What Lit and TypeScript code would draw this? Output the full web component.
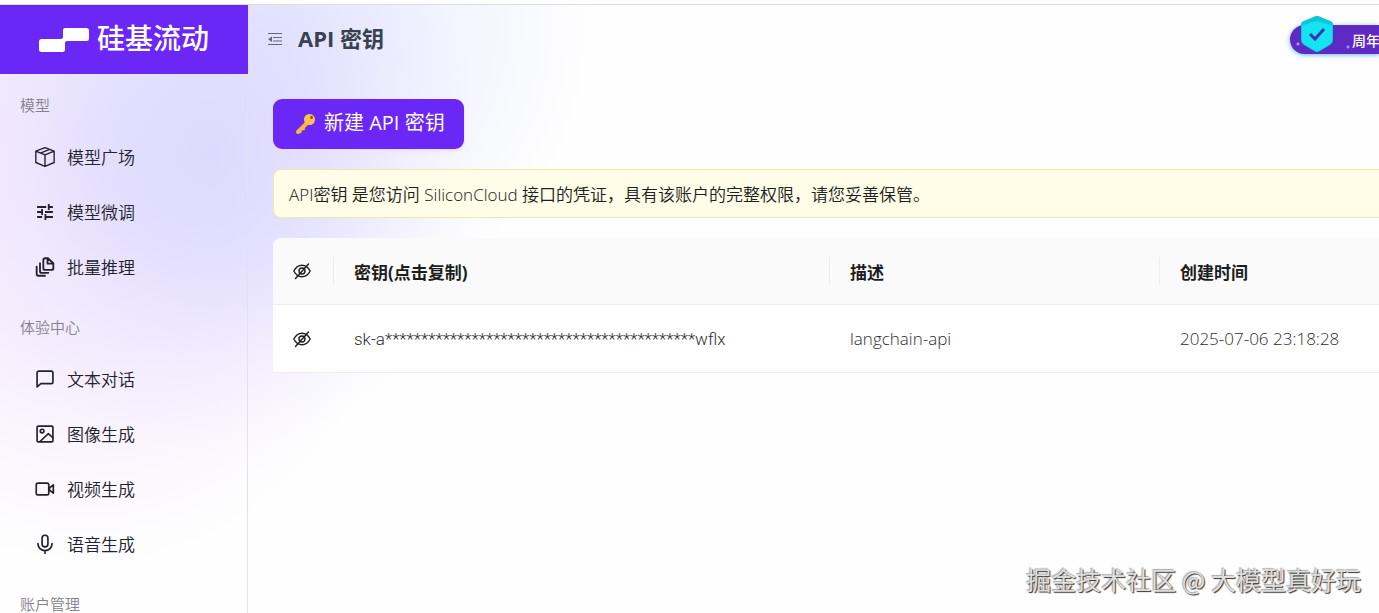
import { LitElement, html, css, svg } from "lit";
import { customElement } from "lit/decorators.js";

const stroke = (body: unknown, width = 2, size = 20) => html`
  <svg viewBox="0 0 24 24" width=${size} height=${size} fill="none" stroke="currentColor"
    stroke-width=${width} stroke-linecap="round" stroke-linejoin="round" aria-hidden="true">${body}</svg>`;

const icons = {
  cube: stroke(svg`<path d="M12 1.800 22 5.600V18L12 22.200 2 18V5.600ZM2 5.600l10 4.200 10-4.200M12 9.800v12.400M7 7.700l10-4"/>`, 1.5, 22),
  tune: stroke(svg`<path stroke-linecap="butt" d="M2.500 6h11M16.500 6h5M16.500 2.500v7M2.500 12h5.500M8.500 8.500v7M12 12h9.500M2.500 18h6M12 18h9.500M12.500 14.500v7"/>`, 2.2),
  batch: stroke(svg`<path d="M15.500 1.500h-3.500a2 2 0 0 0-2 2v10a2 2 0 0 0 2 2h8a2 2 0 0 0 2-2V7.500ZM15 2v6h6M6 7.500V17a2 2 0 0 0 2 2h8M2 11.500V20.500a2 2 0 0 0 2 2H12"/>`, 2.2),
  chat: stroke(svg`<path d="M21.500 15.500a2 2 0 0 1-2 2H7l-4.500 4V4.500a2 2 0 0 1 2-2h15a2 2 0 0 1 2 2Z"/>`, 2),
  image: stroke(svg`<rect x="2.500" y="2.500" width="19" height="19" rx="1.500"/><circle cx="8.500" cy="8.500" r="2.200"/><path d="M6 21 16 11.500l5.500 5"/>`, 2),
  video: stroke(svg`<rect x="1.500" y="5" width="15" height="14" rx="2"/><path d="m17.500 10.500 4.500-3.500v10l-4.500-3.500Z"/>`, 2),
  mic: stroke(svg`<rect x="8.500" y="1.500" width="7" height="14" rx="3.500"/><path d="M3.500 11.500a8.500 8.500 0 0 0 17 0M12 20v3"/>`, 2),
};

const hiddenEye = html`
  <svg viewBox="0 0 20 18" width="20" height="18" fill="none" stroke="currentColor"
    stroke-width="1.400" stroke-linecap="round" aria-hidden="true">
    <path d="M1.800 9C4.200 4.600 7 3.200 10 3.200S15.800 4.600 18.200 9C15.800 13.400 13 14.800 10 14.800S4.200 13.400 1.800 9Z"/>
    <circle cx="10" cy="9" r="3"/><path d="M16.500 2 3.500 16.500"/>
  </svg>`;

const sections = [
  { label: "模型", items: [["cube", "模型广场"], ["tune", "模型微调"], ["batch", "批量推理"]] },
  { label: "体验中心", items: [["chat", "文本对话"], ["image", "图像生成"], ["video", "视频生成"], ["mic", "语音生成"]] },
  { label: "账户管理", items: [] },
] as { label: string; items: [keyof typeof icons, string][] }[];

const keys = [
  { key: "sk-a" + "*".repeat(43) + "wflx", note: "langchain-api", created: "2025-07-06 23:18:28" },
];

@customElement("side-nav")
class SideNav extends LitElement {
  static styles = css`
    :host { display: flex; flex-direction: column; box-sizing: border-box; border-right: 1px solid #e3e1ec; }
    .brand { display: flex; align-items: center; justify-content: center; gap: 8px; height: 69px; flex: none;
      margin-right: -1px; background: #6b27f5; color: #fff; font-size: 28px; line-height: 36px; font-weight: 500; text-decoration: none; }
    .name { padding-bottom: 3px; }
    .label { margin: 0; padding: 19px 20px 12px; font-size: 15px; line-height: 24px; font-weight: 350; color: #85818d; }
    .list { list-style: none; margin: 0; padding: 0 0 2px; }
    .item { display: flex; align-items: center; gap: 11px; height: 55px; padding-left: 34px;
      color: #22222e; font-size: 17px; font-weight: 350; text-decoration: none; }
    .icon { display: flex; justify-content: center; width: 22px; }
  `;
  render() {
    return html`
      <a class="brand" href="#home">
        <svg viewBox="0 0 50 24" width="50" height="24" fill="#fff" aria-hidden="true">
          <path d="M26 0h21.500a2.500 2.500 0 0 1 2.500 2.500v8a2.500 2.500 0 0 1-2.500 2.500H28q-2 0-2 2v6.500a2.500 2.500 0 0 1-2.500 2.500h-21A2.500 2.500 0 0 1 0 21.500v-8A2.500 2.500 0 0 1 2.500 11H22q2 0 2-2V2a2 2 0 0 1 2-2Z"/>
        </svg>
        <span class="name">硅基流动</span>
      </a>
      <nav>
        ${sections.map((s) => html`
          <h2 class="label">${s.label}</h2>
          <ul class="list">
            ${s.items.map(([icon, text]) => html`<li><a class="item" href="#${icon}"><span class="icon">${icons[icon]}</span><span>${text}</span></a></li>`)}
          </ul>`)}
      </nav>`;
  }
}

@customElement("key-table")
class KeyTable extends LitElement {
  static styles = css`
    :host { display: block; }
    table { width: 100%; table-layout: fixed; border-collapse: separate; border-spacing: 0; font-size: 17px; color: #2c2c30; }
    .toggle-col { width: 61px; }
    .key-col { width: 496px; }
    .note-col { width: 330px; }
    th, td { box-sizing: border-box; padding: 0 20px; text-align: left; white-space: nowrap; border-bottom: 1px solid #ededf0; }
    th { height: 67px; background: #fafafa; font-weight: 700; color: #1d1d20; }
    th:first-child { border-top-left-radius: 8px; }
    th:not(:last-child) { background: linear-gradient(#ececee, #ececee) right center / 1px 28px no-repeat #fafafa; }
    td { height: 68px; background: #fff; font-weight: 350; }
    .toggle, .copy { border: 0; padding: 0; background: none; font: inherit; color: inherit; cursor: pointer; }
    .copy { font-family: Roboto, sans-serif; font-weight: 300; }
    .toggle { display: flex; color: #1d1d20; }
    th:first-child, td:first-child { padding: 0 0 0 19px; }
  `;
  render() {
    return html`
      <table>
        <colgroup><col class="toggle-col"><col class="key-col"><col class="note-col"><col></colgroup>
        <thead><tr>
          <th scope="col"><button class="toggle" aria-label="显示全部密钥">${hiddenEye}</button></th>
          <th scope="col">密钥(点击复制)</th>
          <th scope="col">描述</th>
          <th scope="col">创建时间</th>
        </tr></thead>
        <tbody>
          ${keys.map((k) => html`<tr>
            <td><button class="toggle" aria-label="显示密钥">${hiddenEye}</button></td>
            <td><button class="copy">${k.key}</button></td>
            <td>${k.note}</td>
            <td>${k.created}</td>
          </tr>`)}
        </tbody>
      </table>`;
  }
}

@customElement("app-root")
class AppRoot extends LitElement {
  static styles = css`
    :host { display: flex; flex-direction: column; position: relative; height: 100vh; overflow: hidden;
      font-family: "Open Sans", "Noto Sans CJK SC", sans-serif; }
    .edge { height: 4px; flex: none; border-bottom: 1px solid #dcdce2; background: #fff; }
    .shell { display: grid; grid-template-columns: 248px minmax(0, 1fr); flex: 1; min-height: 0;
      background:
        radial-gradient(ellipse 270px 300px at 210px 150px, #dedaff 0%, #e0dcffd0 35%, #e9e6ff60 70%, #ffffff00 100%),
        radial-gradient(ellipse 310px 300px at 280px 20px, #e2e5ff 0%, #eaedffa0 50%, #ffffff00 100%),
        radial-gradient(ellipse 340px 440px at 90px 120px, #f1e2fc 0%, #f4e8fdc0 50%, #ffffff00 100%),
        #fefefe; }
    .main { display: flex; flex-direction: column; min-width: 0; }
    .header { display: flex; align-items: center; height: 69px; padding-left: 18px; }
    .fold { display: flex; border: 0; padding: 0; background: none; color: #66687a; cursor: pointer; }
    .title { margin: 0 auto 0 12px; padding-bottom: 3px; font-size: 22px; line-height: 32px; font-weight: 700; color: #374151; }
    .promo { display: flex; align-items: center; gap: 18px; height: 29px; padding: 0 0 0 10px; width: 89px; box-sizing: border-box;
      border: 0; border-radius: 15px 0 0 15px; color: #fff; font: inherit; font-size: 14px; font-weight: 500; white-space: nowrap; cursor: pointer;
      background: radial-gradient(circle at 8px 19px, #b48cf0 1px, #b48cf000 2px), radial-gradient(circle at 58px 22px, #a888f0 1px, #a888f000 2px), #5d2bc4;
      box-shadow: 0 1px 5px #6cb4f0; }
    .shield { flex: none; margin-top: -12px; }
    .content { display: flex; flex-direction: column; align-items: flex-start; gap: 20px; padding: 25px 0 0 25px; }
    .create { display: flex; align-items: center; gap: 8px; height: 50px; padding: 0 19px 0 21px; border: 0; border-radius: 9px;
      background: #6b27f5; color: #fff; font: inherit; font-size: 20px; line-height: 28px; box-shadow: 0 2px 3px #ecdcff; cursor: pointer; }
    .caption { padding-bottom: 2px; }
    .notice { box-sizing: border-box; width: 100%; margin: 0; padding: 13px 15px 10px; border: 1px solid #f1e8a8; border-right: 0;
      border-radius: 8px 0 0 8px; background: #fffce8; font-size: 17px; line-height: 24px; font-weight: 350; color: #202018; }
    .table { width: 100%; }
    .watermark { position: absolute; right: 18px; bottom: 16px; margin: 0; font-family: "Noto Sans CJK SC", sans-serif; font-size: 25px; line-height: 36px; color: #dedede;
      text-shadow: 1px 1px 1px #333, -1px -1px 1px #aaa; }
  `;
  render() {
    return html`
      <div class="edge"></div>
      <div class="shell">
        <side-nav></side-nav>
        <main class="main">
          <header class="header">
            <button class="fold" aria-label="收起菜单">
              <svg viewBox="0 0 20 18" width="20" height="18" fill="none" stroke="currentColor" stroke-width="1.200" aria-hidden="true">
                <path d="M2 2.500h14M7 6.500h9M7 10h9M2 13.500h14"/><path d="M6 5.500v5.500L2 8.250Z" fill="currentColor" stroke="none"/>
              </svg>
            </button>
            <h1 class="title">API 密钥</h1>
            <button class="promo">
              <svg class="shield" viewBox="0 0 34 38" width="34" height="38" aria-hidden="true">
                <path d="M15 1.300q2-1 4 0l12 5q2 1 2 3V25q0 3-3 5l-10.500 6.300q-2.500 1.400-5 0L4 30q-3-2-3-5V9.300q0-2 2-3Z" fill="#10c5d8"/>
                <path d="M2 10.500 17 6l15 4.500V25q0 3-3 4.800l-9.500 5.500q-2.500 1.400-5 0L5 29.800Q2 28 2 25Z" fill="#14e4f2"/>
                <path d="m10 19 5 5 9-10" fill="none" stroke="#3b35b5" stroke-width="3"/>
              </svg>
              <span>周年</span>
            </button>
          </header>
          <div class="content">
            <button class="create">
              <svg viewBox="0 0 22 22" width="22" height="22" aria-hidden="true">
                <path d="M13.500 9.500 4 19" stroke="#f5b83d" stroke-width="4" stroke-linecap="round"/>
                <path d="m5 17 2 3M8 14l2.500 3" stroke="#f5b83d" stroke-width="2"/>
                <circle cx="15.500" cy="6.500" r="5.500" fill="#fdc04a"/><circle cx="17.500" cy="4.500" r="1.400" fill="#7b4a4a"/>
              </svg>
              <span class="caption">新建 API 密钥</span>
            </button>
            <p class="notice">API密钥 是您访问 SiliconCloud 接口的凭证，具有该账户的完整权限，请您妥善保管。</p>
            <key-table class="table"></key-table>
          </div>
        </main>
      </div>
      <p class="watermark">掘金技术社区 @ 大模型真好玩</p>`;
  }
}
